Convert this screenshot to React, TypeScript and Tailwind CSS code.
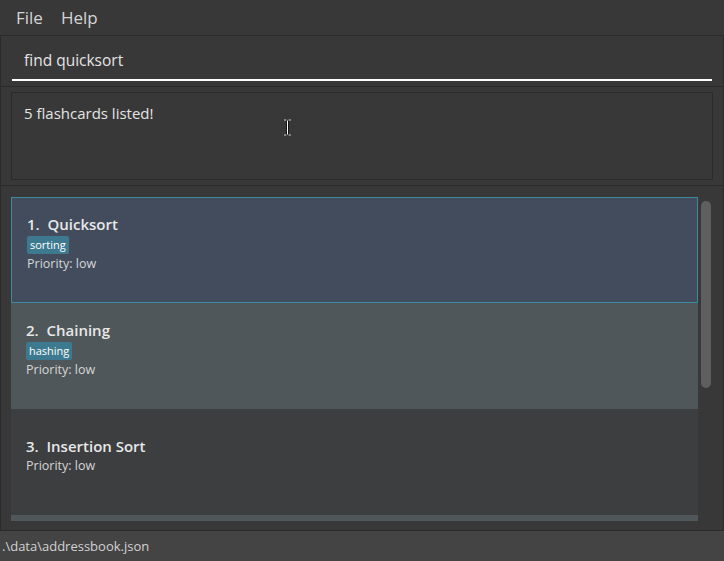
import React from "react";

type Card = { id: number; title: string; tag?: string; priority: string; tone: "selected" | "even" | "odd" };

const cards: Card[] = [
  { id: 1, title: "Quicksort", tag: "sorting", priority: "low", tone: "selected" },
  { id: 2, title: "Chaining", tag: "hashing", priority: "low", tone: "even" },
  { id: 3, title: "Insertion Sort", priority: "low", tone: "odd" },
  { id: 4, title: "Bubble Sort", priority: "low", tone: "even" },
];

const toneClass = {
  selected: "bg-[#424c5c] border border-[#3b8aa0]",
  even: "bg-[#50575a]",
  odd: "bg-[#3d3e40]",
};

function FlashcardItem({ card }: { card: Card }) {
  return (
    <div className={`h-[106px] shrink-0 flex flex-col justify-center px-[15px] pb-[14px] ${toneClass[card.tone]}`}>
      <div className="text-[15px] font-semibold text-[#e8e8e8] leading-[20px]">
        {card.id}.&nbsp;&nbsp;{card.title}
      </div>
      {card.tag && (
        <div className="flex mt-[2px]">
          <span className="bg-[#3d7a90] text-white text-[11px] leading-[18px] px-[3px] rounded-[2px]">
            {card.tag}
          </span>
        </div>
      )}
      <div className="text-[12.5px] text-[#d6d6d6] leading-[16px] mt-[2px]">
        Priority: {card.priority}
      </div>
    </div>
  );
}

export default function App() {
  return (
    <div
      className="w-[724px] h-[561px] bg-[#383838] flex flex-col overflow-hidden relative"
      style={{ fontFamily: '"Open Sans", "Noto Sans", sans-serif' }}
    >
      {/* Menu */}
      <div className="h-[35px] shrink-0 flex items-center gap-[18px] pl-[16px] text-[17px] text-[#d4d4d4]">
        <span>File</span>
        <span>Help</span>
      </div>

      {/* Command box */}
      <div className="h-[52px] shrink-0 border border-[#2b2b2b] px-[11px] pt-[7px]">
        <div className="h-[38px] border-b-2 border-white flex items-center pl-[12px] text-[15.5px] text-[#e4e4e4]">
          find quicksort
        </div>
      </div>

      {/* Result display */}
      <div className="h-[99px] shrink-0 border-x border-b border-[#2b2b2b] px-[10px] pt-[5px]">
        <div className="h-[88px] border border-[#2b2b2b] pl-[12px] pt-[9px] text-[15px] text-[#e4e4e4]">
          5 flashcards listed!
        </div>
      </div>

      {/* List */}
      <div className="flex-1 min-h-0 border-x border-b border-[#2b2b2b] flex pl-[10px] pt-[11px] pb-[9px]">
        <div className="w-[687px] flex flex-col overflow-hidden">
          {cards.map((c) => (
            <FlashcardItem key={c.id} card={c} />
          ))}
        </div>
        <div className="flex-1 pt-[4px] pl-[3px]">
          <div className="w-[10px] h-[187px] rounded-[5px] bg-[#5f5f5f]" />
        </div>
      </div>

      {/* Status bar */}
      <div className="h-[30px] shrink-0 bg-[#444444] flex items-center pl-[2px] text-[13px] leading-[18px] text-[#d2d2d2]">
        .\data\addressbook.json
      </div>

      {/* mouse I-beam */}
      <svg className="absolute left-[283px] top-[119px]" width="9" height="17" viewBox="0 0 9 17">
        <path d="M1 1h2.5M5.5 1H8M4.5 1.5v14M1 16h2.5M5.5 16H8" stroke="#000" strokeWidth="2.2" />
        <path d="M1 1h2.5M5.5 1H8M4.5 1.5v14M1 16h2.5M5.5 16H8" stroke="#fff" strokeWidth="1" />
      </svg>
    </div>
  );
}
